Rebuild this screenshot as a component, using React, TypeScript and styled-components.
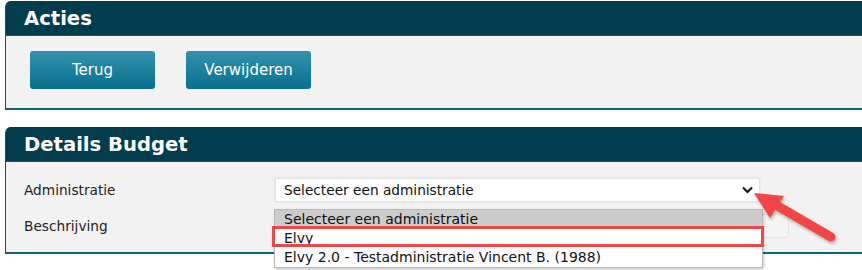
import React from "react";
import styled, { createGlobalStyle } from "styled-components";

const Global = createGlobalStyle`
  html, body { margin: 0; padding: 0; background: #ffffff; overflow: hidden; }
  body { font-family: "DejaVu Sans", Verdana, sans-serif; }
`;

const Page = styled.div`
  position: relative;
  width: 862px;
  height: 270px;
  overflow: hidden;
  padding: 1px 0 0 5px;
  box-sizing: border-box;
  display: flex;
  flex-direction: column;
  gap: 17px;
`;

const Panel = styled.section`
  position: relative;
  margin-right: -20px;
  border-left: 1px solid #0b5870;
  border-bottom: 2px solid #0d6584;
  border-top-left-radius: 6px;
  background: #f2f2f2;
`;

const PanelHeader = styled.h2`
  margin: 0;
  height: 35px;
  box-sizing: border-box;
  background: #023d4d;
  border-top-left-radius: 5px;
  border-bottom: 1px solid #0c5a70;
  color: #ffffff;
  font-family: "DejaVu Sans", Verdana, sans-serif;
  font-weight: bold;
  font-size: 19.6px;
  line-height: 36px;
  padding-left: 18px;
`;

const ActionBody = styled.div`
  height: 72px;
  box-sizing: border-box;
  padding: 15px 0 0 24px;
  display: flex;
  gap: 31px;
  align-items: flex-start;
`;

const Button = styled.button`
  width: 125px;
  height: 38px;
  border: none;
  border-radius: 3px;
  background: linear-gradient(#3392ab, #06708f);
  color: #ffffff;
  font-family: "DejaVu Sans", Verdana, sans-serif;
  font-size: 15px;
  padding: 0;
  cursor: pointer;
`;

const DetailsBody = styled.div`
  position: relative;
  height: 90px;
  box-sizing: border-box;
  padding: 16px 0 0 18px;
  display: grid;
  grid-template-columns: 251px 514px;
  grid-auto-rows: 24px;
  row-gap: 12px;
  align-items: center;
`;

const Label = styled.span`
  font-size: 13.7px;
  color: #222;
`;

const SelectBox = styled.div`
  width: 485px;
  height: 24px;
  box-sizing: border-box;
  background: #fff;
  border: 1px solid #e2e2e2;
  border-radius: 2px;
  box-shadow: 0 0 2px rgba(0, 0, 0, 0.12);
  display: flex;
  align-items: center;
  justify-content: space-between;
  padding: 0 6px 0 8px;
  font-size: 13.7px;
  color: #111;
`;

const InputBox = styled.div`
  width: 514px;
  height: 24px;
  box-sizing: border-box;
  background: #f4f4f4;
  border: 1px solid #e4e4e4;
  border-radius: 2px;
`;

const DropList = styled.ul`
  position: absolute;
  left: 268px;
  top: 47px;
  width: 487px;
  margin: 0;
  padding: 0;
  list-style: none;
  background: #fff;
  border: 1px solid #b9b9b9;
  box-shadow: 1px 2px 3px rgba(0, 0, 0, 0.2);
  z-index: 2;
`;

const Option = styled.li<{ $active?: boolean }>`
  height: 19px;
  line-height: 18px;
  padding-left: 9px;
  font-size: 14px;
  color: #111;
  white-space: nowrap;
  background: ${(p) => (p.$active ? "#cccccc" : "#ffffff")};
`;

const Highlight = styled.div`
  position: absolute;
  left: 266px;
  top: 64px;
  width: 492px;
  height: 21px;
  box-sizing: border-box;
  border: 3px solid #f04848;
  z-index: 3;
`;

const ArrowSvg = styled.svg`
  position: absolute;
  left: 740px;
  top: 180px;
  z-index: 5;
  overflow: visible;
`;

export default function App() {
  return (
    <>
      <Global />
      <Page>
        <Panel>
          <PanelHeader>Acties</PanelHeader>
          <ActionBody>
            <Button>Terug</Button>
            <Button>Verwijderen</Button>
          </ActionBody>
        </Panel>
        <Panel>
          <PanelHeader>Details Budget</PanelHeader>
          <DetailsBody>
            <Label>Administratie</Label>
            <SelectBox>
              <span>Selecteer een administratie</span>
              <svg width="11" height="8" viewBox="0 0 11 8">
                <path d="M1 1.5 L5.5 6 L10 1.5" fill="none" stroke="#111" strokeWidth="2" />
              </svg>
            </SelectBox>
            <Label>Beschrijving</Label>
            <InputBox />
            <DropList>
              <Option $active>Selecteer een administratie</Option>
              <Option>Elvy</Option>
              <Option>Elvy 2.0 - Testadministratie Vincent B. (1988)</Option>
            </DropList>
            <Highlight />
          </DetailsBody>
        </Panel>
        <ArrowSvg width="110" height="70" viewBox="0 0 110 70">
          <defs>
            <filter id="sh" x="-20%" y="-20%" width="140%" height="140%">
              <feDropShadow dx="1" dy="2" stdDeviation="1.5" floodColor="#000" floodOpacity="0.3" />
            </filter>
          </defs>
          <g filter="url(#sh)">
            <line x1="91" y1="57" x2="36" y2="25" stroke="#f24545" strokeWidth="9" strokeLinecap="round" />
            <polygon points="14,13 44,16 30,38" fill="#f24545" />
          </g>
        </ArrowSvg>
      </Page>
    </>
  );
}
